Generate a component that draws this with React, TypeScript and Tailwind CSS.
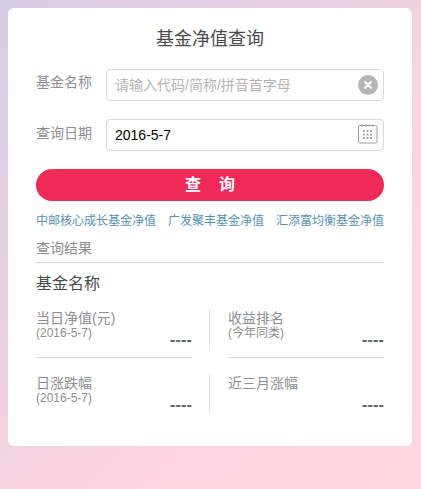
const font = "font-['Liberation_Sans','Noto_Sans_CJK_SC',sans-serif]"

function ResultCell({ title, sub }: { title: string; sub?: string }) {
    return (
        <div className="flex-1 h-[39px] relative">
            <div className="text-[14px] leading-[16px] text-[#8e8e93] pt-[1px]">{title}</div>
            {sub && <div className="text-[12px] leading-[13px] mt-[1px] text-[#8e8e93]">{sub}</div>}
            <div className="absolute right-[0px] top-[22px] text-[16px] leading-[18px] font-bold text-[#666] tracking-[0.2px]">----</div>
        </div>
    )
}

function CalendarIcon() {
    return (
        <svg className="-mt-[2px]" width="20" height="20" viewBox="0 0 20 20" fill="none">
            <rect x="0.5" y="1.5" width="18.5" height="17.5" rx="1.5" stroke="#9a9a9a" />
            <path d="M4 0v3M7.5 0v3M11 0v3M14.5 0v3" stroke="#b5b5b5" />
            <path d="M5 7h9.5M5 10.5h9.5M5 14h9.5" stroke="#aaaaaa" strokeWidth="2" strokeDasharray="2 1.5" />
        </svg>
    )
}

export default function App() {
    return (
        <div className={`${font} h-[489px] w-[421px] bg-[linear-gradient(135deg,#d6cce4_0%,#fdd6df_70%,#fed7df_100%)] pt-[8px] pl-[8px] pr-[9px] overflow-hidden`}>
            <div className="bg-white rounded-[6px] h-[438px] px-[28px] pt-[19px]">
                <h1 className="text-[18px] leading-[25px] text-[#4a4a4a] text-center font-normal">基金净值查询</h1>

                <div className="flex mt-[17px] items-start">
                    <label className="w-[70px] text-[14px] leading-[20px] pt-[3px] text-[#8e8e93]">基金名称</label>
                    <div className="flex-1 h-[32px] border border-[#d8d8d8] rounded-[4px] flex items-center pl-[8px] pr-[5px]">
                        <span className="flex-1 text-[14px] text-[#b4b4b4]">请输入代码/简称/拼音首字母</span>
                        <span className="w-[20px] h-[20px] rounded-full bg-[#b5b5b5] flex items-center justify-center">
                            <svg width="10" height="10" viewBox="0 0 10 10">
                                <path d="M1.5 1.5l7 7M8.5 1.5l-7 7" stroke="#fff" strokeWidth="2.2" />
                            </svg>
                        </span>
                    </div>
                </div>

                <div className="flex mt-[18px] items-start">
                    <label className="w-[70px] text-[14px] leading-[20px] pt-[4px] text-[#8e8e93]">查询日期</label>
                    <div className="flex-1 h-[32px] border border-[#d8d8d8] rounded-[4px] flex items-center pl-[8px] pr-[5px]">
                        <span className="flex-1 text-[14px] text-black">2016-5-7</span>
                        <CalendarIcon />
                    </div>
                </div>

                <button className="mt-[18px] w-full h-[32px] rounded-full bg-[#ee2b58] text-white text-[16px] font-bold text-center">查&nbsp;&nbsp;&nbsp;&nbsp;询</button>

                <div className="flex justify-between mt-[11px] text-[12px] leading-[18px] text-[#5a91b3]">
                    <span>中邮核心成长基金净值</span>
                    <span>广发聚丰基金净值</span>
                    <span>汇添富均衡基金净值</span>
                </div>

                <div className="mt-[8px] text-[14px] leading-[20px] text-[#8e8e93] pb-[4px] border-b border-[#d8d8d8]">查询结果</div>
                <div className="mt-[10px] text-[16px] leading-[22px] text-[#4a4a4a]">基金名称</div>

                <div className="mt-[14px] flex">
                    <ResultCell title="当日净值(元)" sub="(2016-5-7)" />
                    <div className="w-[1px] h-[39px] bg-[#e0e0e0] ml-[17px] mr-[18px]"></div>
                    <ResultCell title="收益排名" sub="(今年同类)" />
                </div>
                <div className="flex gap-[36px] mt-[9px]">
                    <div className="flex-1 border-t border-[#d8d8d8]"></div>
                    <div className="flex-1 border-t border-[#d8d8d8]"></div>
                </div>
                <div className="mt-[16px] flex">
                    <ResultCell title="日涨跌幅" sub="(2016-5-7)" />
                    <div className="w-[1px] h-[39px] bg-[#e0e0e0] ml-[17px] mr-[18px]"></div>
                    <ResultCell title="近三月涨幅" />
                </div>
            </div>
        </div>
    )
}
